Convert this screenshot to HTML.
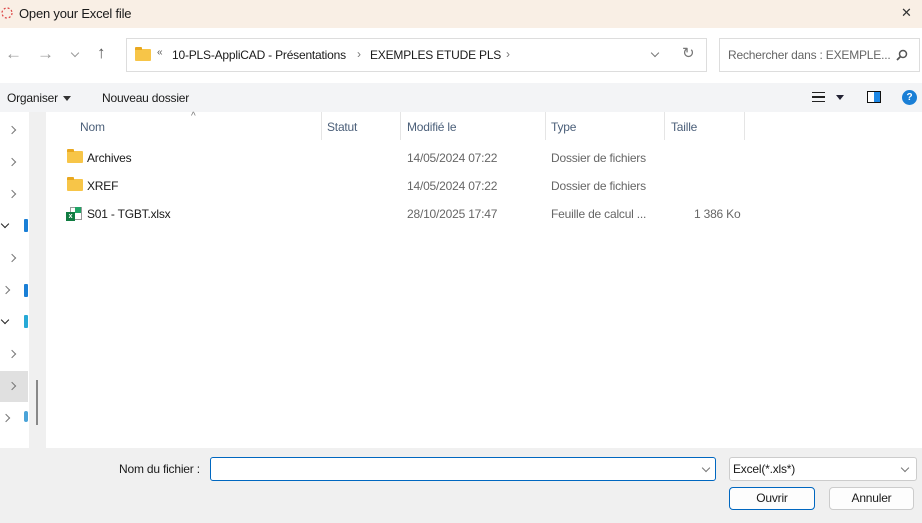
<!DOCTYPE html><html><head><style>
*{margin:0;padding:0;box-sizing:border-box}
body{width:922px;height:523px;overflow:hidden;background:#fff;font-family:"Liberation Sans",sans-serif;font-size:12px;color:#1a1a1a;position:relative;letter-spacing:-0.2px}
.a{position:absolute;white-space:nowrap}
.g{color:#666}
.chev{position:absolute;width:6px;height:6px;border-right:1.3px solid #777;border-bottom:1.3px solid #777;transform:rotate(-45deg)}
.chd{position:absolute;width:6px;height:6px;border-right:1.6px solid #222;border-bottom:1.6px solid #222;transform:rotate(45deg)}
.fold{position:absolute;width:16px;height:12px;background:#f7c548;border-radius:1px}
.fold:before{content:"";position:absolute;left:0;top:-2px;width:7px;height:3px;background:#e9a820;border-radius:1px 1px 0 0}
.col{position:absolute;top:112px;height:28px;border-left:1px solid #e5e5e5}
.btn{position:absolute;height:23px;border:1px solid #ccc;border-radius:4px;background:#fdfdfd;text-align:center;line-height:21px}
</style></head><body>
<div class="a" style="left:0;top:0;width:922px;height:28px;background:#f9efe5"></div>
<svg class="a" style="left:0;top:5px" width="14" height="16"><circle cx="7" cy="8" r="5" fill="none" stroke="#d44" stroke-width="1.2" stroke-dasharray="2 2"/></svg>
<div class="a" style="left:19px;top:6px;font-size:13px">Open your Excel file</div>
<div class="a" style="left:901px;top:5px;font-size:13px;color:#333">✕</div>
<div class="a" style="left:5px;top:44px;font-size:17px;color:#999">←</div>
<div class="a" style="left:37px;top:44px;font-size:17px;color:#999">→</div>
<div class="chd" style="left:72px;top:50px;border-color:#999;border-width:1px"></div>
<div class="a" style="left:97px;top:43px;font-size:17px;color:#555">↑</div>
<div class="a" style="left:126px;top:38px;width:581px;height:34px;border:1px solid #ddd;background:#fff"></div>
<div class="fold" style="left:135px;top:49px"></div>
<div class="a" style="left:157px;top:47px;font-size:10px;color:#555">«</div>
<div class="a" style="left:172px;top:48px">10-PLS-AppliCAD - Présentations</div>
<div class="a" style="left:357px;top:47px;color:#777">›</div>
<div class="a" style="left:370px;top:48px">EXEMPLES ETUDE PLS</div>
<div class="a" style="left:506px;top:47px;color:#777">›</div>
<div class="chd" style="left:652px;top:50px;border-color:#777;border-width:1px"></div>
<div class="a" style="left:682px;top:44px;font-size:15px;color:#777">↻</div>
<div class="a" style="left:719px;top:38px;width:201px;height:34px;border:1px solid #ddd;background:#fff"></div>
<div class="a g" style="left:728px;top:48px">Rechercher dans : EXEMPLE...</div>
<svg class="a" style="left:895px;top:48px" width="14" height="14"><circle cx="8" cy="6" r="3.5" fill="none" stroke="#555" stroke-width="1.5"/><line x1="5.5" y1="8.5" x2="2" y2="12" stroke="#555" stroke-width="1.8"/></svg>
<div class="a" style="left:0;top:83px;width:922px;height:29px;background:#f3f4f6"></div>
<div class="a" style="left:7px;top:91px">Organiser</div>
<div class="a" style="left:63px;top:96px;border:4px solid transparent;border-top:5px solid #333"></div>
<div class="a" style="left:102px;top:91px">Nouveau dossier</div>
<div class="a" style="left:812px;top:92px;width:13px;height:10px;border-top:1.5px solid #222;border-bottom:1.5px solid #222"></div>
<div class="a" style="left:812px;top:96px;width:13px;height:1.5px;background:#222"></div>
<div class="a" style="left:836px;top:95px;border:4px solid transparent;border-top:5px solid #223"></div>
<div class="a" style="left:867px;top:91px;width:14px;height:12px;border:1.5px solid #111;background:linear-gradient(90deg,#fff 50%,#1e88e5 50%)"></div>
<div class="a" style="left:902px;top:90px;width:15px;height:15px;border-radius:50%;background:#1a7fd6;color:#fff;font-size:10px;font-weight:bold;text-align:center;line-height:15px">?</div>
<div class="a" style="left:29px;top:112px;width:17px;height:336px;background:#f0f0f0"></div>
<div class="a" style="left:36px;top:380px;width:2px;height:45px;background:#888"></div>
<div class="a" style="left:0;top:371px;width:28px;height:31px;background:#e0e0e0"></div>
<div class="chev" style="left:9px;top:127px"></div><div class="chev" style="left:9px;top:159px"></div><div class="chev" style="left:9px;top:191px"></div>
<div class="chd" style="left:2px;top:221px"></div><div class="a" style="left:24px;top:219px;width:4px;height:13px;background:#1a7fd6;border-radius:1px"></div>
<div class="chev" style="left:9px;top:255px"></div>
<div class="chev" style="left:3px;top:287px"></div><div class="a" style="left:24px;top:284px;width:4px;height:13px;background:#1a7fd6;border-radius:1px"></div>
<div class="chd" style="left:2px;top:317px"></div><div class="a" style="left:24px;top:315px;width:4px;height:13px;background:#27a9d6;border-radius:1px"></div>
<div class="chev" style="left:9px;top:351px"></div><div class="chev" style="left:9px;top:383px"></div>
<div class="chev" style="left:3px;top:415px"></div><div class="a" style="left:24px;top:411px;width:4px;height:11px;background:#4aa3d8;border-radius:2px"></div>
<div class="a" style="left:80px;top:120px;font-size:12px;color:#4c607a">Nom</div>
<div class="a" style="left:191px;top:111px;font-size:10px;color:#777">^</div>
<div class="col" style="left:321px"></div><div class="col" style="left:400px"></div><div class="col" style="left:545px"></div><div class="col" style="left:664px"></div><div class="col" style="left:744px"></div>
<div class="a" style="left:327px;top:120px;color:#4c607a">Statut</div>
<div class="a" style="left:407px;top:120px;color:#4c607a">Modifié le</div>
<div class="a" style="left:551px;top:120px;color:#4c607a">Type</div>
<div class="a" style="left:671px;top:120px;color:#4c607a">Taille</div>
<div class="fold" style="left:67px;top:151px"></div>
<div class="a" style="left:87px;top:151px">Archives</div>
<div class="a g" style="left:407px;top:151px">14/05/2024 07:22</div>
<div class="a g" style="left:551px;top:151px">Dossier de fichiers</div>
<div class="fold" style="left:67px;top:179px"></div>
<div class="a" style="left:87px;top:179px">XREF</div>
<div class="a g" style="left:407px;top:179px">14/05/2024 07:22</div>
<div class="a g" style="left:551px;top:179px">Dossier de fichiers</div>
<div class="a" style="left:70px;top:207px;width:12px;height:13px;border:1px solid #999;background:#fff"></div>
<div class="a" style="left:75px;top:207px;width:6px;height:6px;background:#21a366"></div>
<div class="a" style="left:66px;top:212px;width:9px;height:9px;background:#107c41;color:#fff;font-size:7px;font-weight:bold;text-align:center;line-height:9px">x</div>
<div class="a" style="left:87px;top:207px">S01 - TGBT.xlsx</div>
<div class="a g" style="left:407px;top:207px">28/10/2025 17:47</div>
<div class="a g" style="left:551px;top:207px">Feuille de calcul ...</div>
<div class="a g" style="left:694px;top:207px">1 386 Ko</div>
<div class="a" style="left:0;top:448px;width:922px;height:75px;background:#f0f0f0"></div>
<div class="a" style="left:119px;top:462px">Nom du fichier :</div>
<div class="a" style="left:210px;top:457px;width:506px;height:24px;border:1px solid #0067c0;border-radius:3px;background:#fff"></div>
<div class="chd" style="left:703px;top:465px;border-color:#777;border-width:1px"></div>
<div class="a" style="left:729px;top:457px;width:188px;height:24px;border:1px solid #ccc;border-radius:3px;background:#fff"></div>
<div class="a" style="left:733px;top:462px">Excel(*.xls*)</div>
<div class="chd" style="left:902px;top:465px;border-color:#777;border-width:1px"></div>
<div class="btn" style="left:729px;top:487px;width:86px;border:1px solid #0067c0">Ouvrir</div>
<div class="btn" style="left:829px;top:487px;width:85px">Annuler</div>
</body></html>
